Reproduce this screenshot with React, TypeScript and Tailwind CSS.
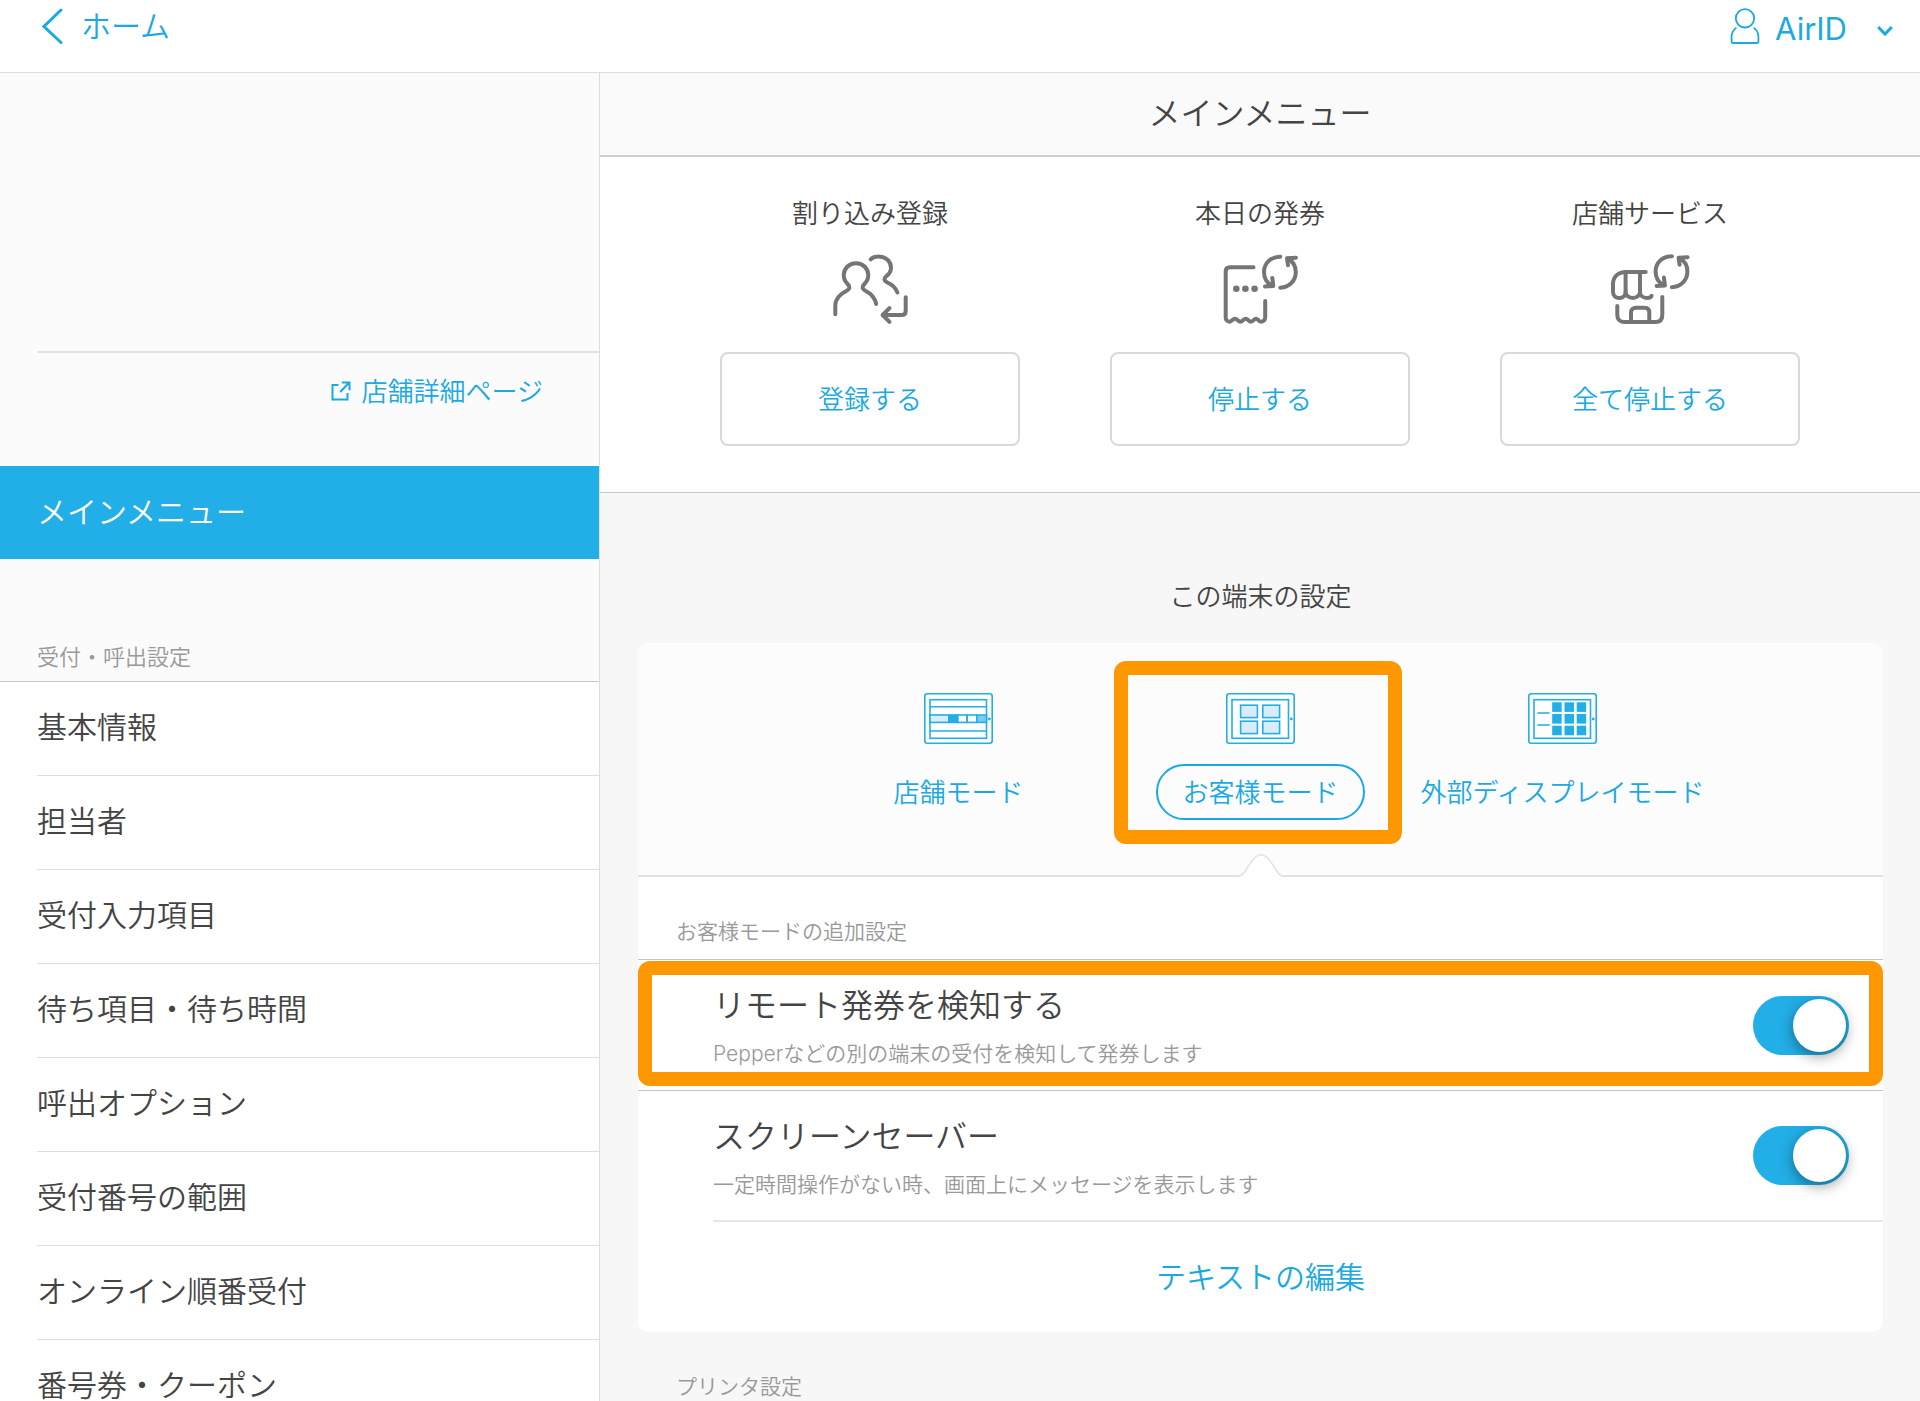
import React, { useState } from 'react';

const menuItems = [
  '基本情報',
  '担当者',
  '受付入力項目',
  '待ち項目・待ち時間',
  '呼出オプション',
  '受付番号の範囲',
  'オンライン順番受付',
  '番号券・クーポン',
];

const RefreshArrows = () => (
  <>
    <path d="M60.3 4.7C50.5 4.7 44 11.5 44 20C44 26 47 31 52 33.7" />
    <path d="M45 34.4L53.3 34L52.3 26" />
    <path d="M60.3 35.7C69.5 35.3 75.8 28.5 75.8 20C75.8 14.5 73 9.5 67.6 6.6" />
    <path d="M76 5.7L67 6.3L68 13.3" />
  </>
);

const actionSvg = {
  className: 'mt-[18px] h-20 w-20',
  viewBox: '0 0 80 80',
  fill: 'none',
  stroke: '#757575',
  strokeWidth: 4,
  strokeLinecap: 'round' as const,
  strokeLinejoin: 'round' as const,
};

const PeopleIcon = () => (
  <svg {...actionSvg}>
    <path d="M5.3 62.3V53.5C5.3 46 11 41.5 17 38.5C20 37 20 34.5 18 32.5C15 29.5 13.7 26.5 13.7 23.3C13.7 16.5 19 11.3 26 11.3S38.3 16.5 38.3 23.3C38.3 26.5 37 29.5 34 32.5C32 34.5 32 37 35 38.5C41 41.5 45 46 46.2 52" />
    <path d="M40.7 7.3C43 5.2 45.7 4.5 48.5 4.5C56 4.5 61 9.5 61 16C61 20 59 22.3 56 24.5C53.8 26.3 54 28.8 56.5 30C62 32.5 66 36 67.4 40.5" />
    <path d="M75.7 45.3V59C75.7 61.5 74.2 63 71.7 63H52.7" />
    <path d="M59.5 56.2L52.7 63L59.5 69.8" />
  </svg>
);

const TicketIcon = () => (
  <svg {...actionSvg}>
    <path d="M33.5 15.3H10C7.3 15.3 5.7 17 5.7 19.7V65.5C5.7 68 7.2 69.7 9.5 69.7C11.5 69.7 12.8 66.7 15 66.7S18.3 69.7 20.4 69.7S23.6 66.7 25.7 66.7S28.9 69.7 31 69.7S34 66.7 36 66.7S38.7 69.7 40.7 69.7C43.5 69.7 45.2 68 45.2 65.5V49" />
    <g fill="#757575" stroke="none">
      <circle cx="16.3" cy="36.7" r="3.3" />
      <circle cx="25.4" cy="36.7" r="3.3" />
      <circle cx="34.6" cy="36.7" r="3.3" />
    </g>
    <RefreshArrows />
  </svg>
);

const StoreIcon = () => (
  <svg {...actionSvg}>
    <path d="M35.7 20H16C8 20 3 25 3 32V39.7C3 43.5 5.5 46 9.3 46S15.6 43.5 15.6 40V20" />
    <path d="M15.6 40C15.6 43.5 19 46 22.8 46S30 43.5 30 40V20" />
    <path d="M30 40C30 43.5 33 46 37 46C39.5 46 41 45.2 41.6 43.9" />
    <path d="M7.3 54V63C7.3 67.5 10 70 14 70H45.5C50 70 52.3 67.5 52.3 63V45" />
    <path d="M21 69V60.5C21 57.5 23 55.7 26 55.7H34.5C37.5 55.7 39.3 57.5 39.3 60.5V69" />
    <g transform="translate(1.6 -0.5)">
      <RefreshArrows />
    </g>
  </svg>
);

const Tablet = ({ children }: { children: React.ReactNode }) => (
  <svg className="h-[51px] w-[69px]" viewBox="0 0 69 51" fill="none" stroke="#22aee6" strokeWidth="1.6">
    <rect x="0.8" y="0.8" width="67.4" height="49.4" rx="2.4" fill="#fff" />
    <rect x="6" y="6.7" width="56.5" height="38.6" />
    <circle cx="65.3" cy="26" r="1.4" fill="#22aee6" stroke="none" />
    {children}
  </svg>
);

const StoreModeIcon = () => (
  <Tablet>
    <path d="M6 13.8H62.5M6 38H62.5" />
    <rect x="6" y="22" width="19" height="7.4" fill="#d8edf8" />
    <rect x="25" y="22" width="8.6" height="7.4" fill="#22aee6" />
    <rect x="33.6" y="22" width="9.4" height="7.4" />
    <rect x="43" y="22" width="9.8" height="7.4" />
    <rect x="52.8" y="22" width="9.7" height="7.4" fill="#7ccaee" />
  </Tablet>
);

const CustomerModeIcon = () => (
  <Tablet>
    <g fill="#d8edf8">
      <rect x="14.6" y="12.2" width="16.8" height="12.4" />
      <rect x="36.8" y="12.2" width="16.8" height="12.4" />
      <rect x="14.6" y="28.2" width="16.8" height="12.4" />
      <rect x="36.8" y="28.2" width="16.8" height="12.4" />
    </g>
  </Tablet>
);

const DisplayModeIcon = () => (
  <Tablet>
    <path d="M9.3 20H21.7M9.3 32H21.7" />
    {[9.3, 21, 32.7].map((y) =>
      [24.2, 36.5, 48.7].map((x) => (
        <rect key={`${x}-${y}`} x={x} y={y} width="9.5" height="9.6" fill="#22aee6" stroke="none" />
      ))
    )}
  </Tablet>
);

const actions = [
  { title: '割り込み登録', button: '登録する', Icon: PeopleIcon },
  { title: '本日の発券', button: '停止する', Icon: TicketIcon },
  { title: '店舗サービス', button: '全て停止する', Icon: StoreIcon },
];

const modes = [
  { name: '店舗モード', Icon: StoreModeIcon },
  { name: 'お客様モード', Icon: CustomerModeIcon },
  { name: '外部ディスプレイモード', Icon: DisplayModeIcon },
];

const Header = () => (
  <header className="flex h-[73px] shrink-0 justify-between border-b border-[#dedede] bg-white pr-[27px] pl-[42px] text-[#1aa9e3]">
    <a href="#" className="flex h-[52px] items-center gap-[18px] text-[30px] leading-[52px]">
      <svg className="h-9 w-[21px]" viewBox="0 0 21 36" fill="none" stroke="currentColor" strokeWidth="3" strokeLinecap="round">
        <path d="M19 2L2 18.5L19 34.5" />
      </svg>
      ホーム
    </a>
    <button className="flex h-[58px] items-center text-[31px] font-normal">
      <svg className="mr-[15px] mb-1.5 h-9 w-[30px]" viewBox="0 0 30 36" fill="none" stroke="currentColor" strokeWidth="1.8">
        <circle cx="15" cy="10.3" r="9.2" />
        <path d="M6.4 19.6C3.2 22 1.6 25 1.6 28.5V33.2C1.6 34.4 2.2 35 3.4 35H26.6C27.8 35 28.4 34.4 28.4 33.2V28.5C28.4 25 26.8 22 23.6 19.6" />
      </svg>
      AirID
      <svg className="mt-1 ml-[30px] h-3 w-4" viewBox="0 0 16 12" fill="none" stroke="currentColor" strokeWidth="3">
        <path d="M1.2 2L8 9L14.8 2" />
      </svg>
    </button>
  </header>
);

const Sidebar = () => (
  <aside className="w-[31.25%] shrink-0 border-r border-[#dedede] bg-[#fbfbfb]">
    <div className="ml-[37px] h-[280px] border-b-2 border-[#e3e3e3]" />
    <div className="flex h-[113px] justify-end pt-[18px] pr-14">
      <a href="#" className="flex h-10 items-center gap-[11px] text-[26px] text-[#1aa9e3]">
        <svg className="h-5 w-5" viewBox="0 0 20 20" fill="none" stroke="currentColor" strokeWidth="2">
          <path d="M7.5 4H1.5V18.6H16.5V12" />
          <path d="M9.2 11L18 1.8M10.8 1.5H18.5V9.2" />
        </svg>
        店舗詳細ページ
      </a>
    </div>
    <a href="#" className="flex h-[93px] items-center bg-[#22aee6] pl-[37px] text-[30px] text-white">
      メインメニュー
    </a>
    <h2 className="border-b border-[#c8c8c8] pt-[82px] pb-2 pl-[37px] text-[22px] leading-8 text-[#999]">
      受付・呼出設定
    </h2>
    <nav className="bg-white pl-[37px] text-[30px] leading-7">
      {menuItems.map((item) => (
        <a key={item} href="#" className="flex h-[94px] items-center border-b border-[#dedede] pb-1">
          {item}
        </a>
      ))}
    </nav>
  </aside>
);

const Toggle = ({ id }: { id: string }) => {
  const [on, setOn] = useState(true);

  return (
    <input
      id={id}
      type="checkbox"
      role="switch"
      checked={on}
      onChange={() => setOn(!on)}
      className="h-[59px] w-24 shrink-0 appearance-none rounded-full bg-gray-300 p-[3px] before:block before:size-[53px] before:rounded-full before:bg-white before:shadow-[0_4px_14px_rgba(0,0,0,0.4)] checked:bg-[#22aee6] checked:before:ml-[37px]"
    />
  );
};

const SettingText = ({ id, title, note }: { id: string; title: string; note: string }) => (
  <label htmlFor={id} className="block pt-2.5">
    <span className="block text-[32px] leading-[48px]">{title}</span>
    <span className="block text-[21px] leading-[48px] text-[#999]">{note}</span>
  </label>
);

const DeviceSettings = () => {
  const [mode, setMode] = useState('お客様モード');

  return (
    <section className="pt-[84px] pr-[37px] pl-[38px]">
      <h2 className="text-center text-[26px] leading-10">この端末の設定</h2>
      <div className="mt-[26px] rounded-[10px] bg-white">
        {/* Mode tabs */}
        <div className="flex justify-center rounded-t-[10px] border-b-2 border-[#e2e2e2] bg-[#fcfcfc] pt-[50px] pb-[55px]">
          {modes.map(({ name, Icon }) => (
            <button key={name} onClick={() => setMode(name)} className="relative flex w-[302px] flex-col items-center text-[26px] text-[#1aa9e3]">
              <Icon />
              <span
                className={`mt-5 flex h-14 items-center rounded-full border-2 px-6 whitespace-nowrap ${
                  name === mode ? 'border-[#1aa9e3]' : 'border-transparent'
                }`}
              >
                {name}
              </span>
              {name === mode && (
                <>
                  <span className="absolute -top-8 right-2.5 -bottom-6 left-1 rounded-xl border-[14px] border-[#ff9800]" />
                  <svg className="absolute top-[161px] h-6 w-[50px]" viewBox="0 0 50 24" fill="#fff" stroke="#e2e2e2" strokeWidth="1.5">
                    <path d="M4 24V22C8 21 9 17 13.5 10.5C18 3.5 21 0.8 25 0.8S32 3.5 36.5 10.5C41 17 42 21 46 22V24" stroke="none" />
                    <path d="M3 22C8 21.5 9 17 13.5 10.5C18 3.5 21 0.8 25 0.8S32 3.5 36.5 10.5C41 17 42 21.5 47 22" fill="none" />
                  </svg>
                </>
              )}
            </button>
          ))}
        </div>
        <h3 className="border-b border-[#c4c4c4] pt-[39px] pb-[11px] pl-[38px] text-[21px] leading-8 text-[#999]">
          お客様モードの追加設定
        </h3>
        {/* Toggle rows */}
        <div className="relative flex h-[131px] items-center justify-between border-b border-[#c4c4c4] pr-[34px] pl-[75px]">
          <SettingText id="remote" title="リモート発券を検知する" note="Pepperなどの別の端末の受付を検知して発券します" />
          <Toggle id="remote" />
          <span className="pointer-events-none absolute inset-x-0 top-px bottom-1 rounded-xl border-[14px] border-[#ff9800]" />
        </div>
        <div className="pl-[75px]">
          <div className="flex h-[131px] items-center justify-between border-b-2 border-[#e6e6e6] pr-[34px]">
            <SettingText id="saver" title="スクリーンセーバー" note="一定時間操作がない時、画面上にメッセージを表示します" />
            <Toggle id="saver" />
          </div>
        </div>
        <button className="block h-[110px] w-full text-center text-[30px] text-[#1aa9e3]">テキストの編集</button>
      </div>
      <h3 className="mt-[39px] pl-[38px] text-[21px] leading-8 text-[#999]">プリンタ設定</h3>
    </section>
  );
};

const App = () => (
  <div
    lang="ja"
    className="flex h-screen flex-col overflow-hidden bg-[#f7f7f7] font-['Inter','Noto_Sans_CJK_JP',sans-serif] font-[350] text-[#444]"
  >
    <Header />
    <div className="flex min-h-0 flex-1">
      <Sidebar />
      <main className="min-w-0 flex-1">
        <h1 className="flex h-[84px] items-center justify-center border-b-2 border-[#cfcfcf] bg-[#fafafa] text-[32px] font-[350]">
          メインメニュー
        </h1>
        <section className="flex justify-center gap-[90px] border-b border-[#c8c8c8] bg-white pt-[37px] pb-[46px]">
          {actions.map(({ title, button, Icon }) => (
            <div key={title} className="flex w-[300px] flex-col items-center text-[26px]">
              <h2 className="leading-10">{title}</h2>
              <Icon />
              <button className="mt-5 h-[94px] w-full rounded-lg border-2 border-[#d9d9d9] text-[#1aa9e3]">{button}</button>
            </div>
          ))}
        </section>
        <DeviceSettings />
      </main>
    </div>
  </div>
);

export default App;
